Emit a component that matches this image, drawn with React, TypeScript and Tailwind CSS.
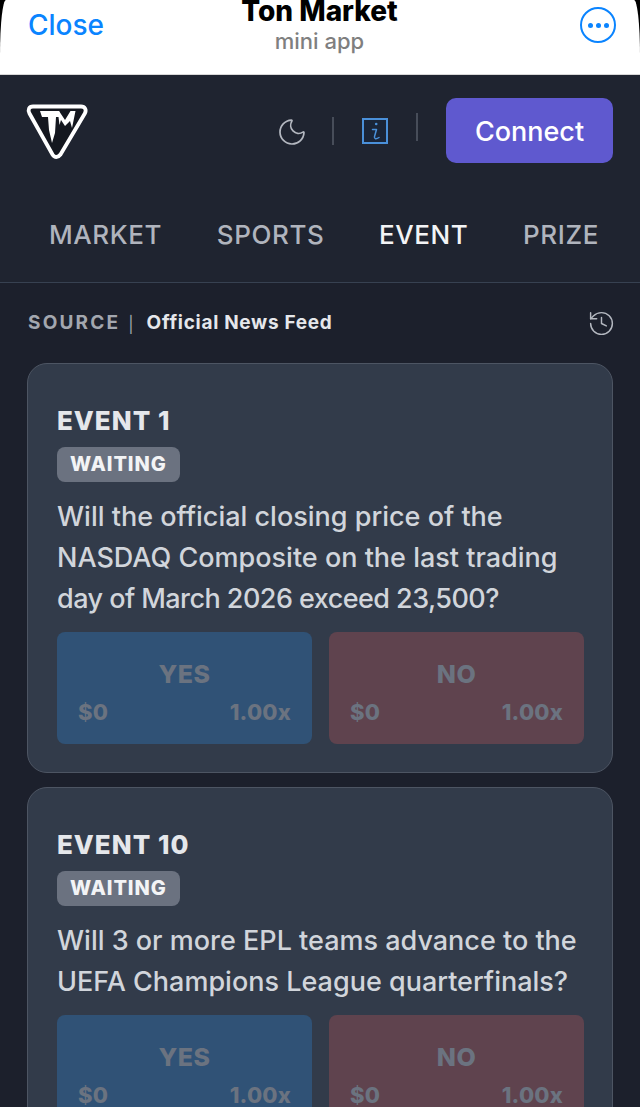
import { type ReactNode } from "react";
import { History, Moon } from "lucide-react";

type EventCardProps = {
  title: string;
  question: ReactNode;
};

const Logo = () => (
  <svg width="68" height="62" viewBox="0 0 68 62" fill="none" className="mt-[2px] ml-[-3px]">
    <path
      d="M9 6.500 H57 C61 6.500 62.800 10 60.800 13.500 L36.500 54.500 C34 57.800 30.500 57.800 28.500 54.500 L5.500 13.500 C3.500 10 5 6.500 9 6.500 Z"
      stroke="white"
      strokeWidth="3.800"
      strokeLinejoin="round"
      fill="#14171f"
    />
    <path d="M16 11 H35 L37 17 H32 L31 33 L28 43 L25 30 L24 17 H18 Z" fill="white" />
    <path d="M35 11 L41 20 L46.500 11 H51.500 L48 28 L46 21 L41 26 L37 20 L35.500 25 L34.500 17 Z" fill="white" />
  </svg>
);

const InfoIcon = () => (
  <svg width="26" height="26" viewBox="0 0 26 26" fill="none" className="mt-[1px] ml-[28px]">
    <rect x="1" y="1" width="24" height="24" fill="#1a2538" stroke="#4a90d9" strokeWidth="2" />
    <circle cx="14.200" cy="6" r="1.300" fill="#4a90d9" />
    <path
      d="M10.500 11.500 H14.500 L12.500 18.500 C12 21 14 21.500 17 19.500"
      stroke="#4a90d9"
      strokeWidth="1.500"
      strokeLinecap="round"
      strokeLinejoin="round"
    />
  </svg>
);

const BetButton = ({ label, bg }: { label: string; bg: string }) => (
  <div className={`h-[112px] flex-1 rounded-lg px-[21px] pt-[26px] font-extrabold text-[#6b7380] ${bg}`}>
    <p className="text-center text-[25px] leading-[32px] tracking-[0.5px]">{label}</p>
    <div className="mt-[9px] flex justify-between text-[22px] leading-[26px] tracking-[0.2px]">
      <span>$0</span>
      <span>1.00x</span>
    </div>
  </div>
);

const EventCard = ({ title, question }: EventCardProps) => (
  <div className="rounded-[20px] border border-[#4d5563] bg-[#323b4a] pt-[40px] pr-[28px] pb-[28px] pl-[29px]">
    <h3 className="text-[26px] leading-[34px] font-extrabold tracking-[1px] text-[#e5e7eb]">{title}</h3>
    <span className="mt-[9px] inline-block rounded-lg bg-[#6b7280] px-[13px] text-[20px] leading-[35px] font-extrabold tracking-[0.9px] text-[#f3f4f6]">
      WAITING
    </span>
    <p className="mt-[14px] text-[27px] leading-[41px] font-medium text-[#d1d5db]">{question}</p>
    <div className="mt-[13px] flex gap-[17px]">
      <BetButton label="YES" bg="bg-[#305276]" />
      <BetButton label="NO" bg="bg-[#5f434e]" />
    </div>
  </div>
);

export default function App() {
  return (
    <div className="h-[1107px] w-[640px] overflow-hidden bg-[#1f2430] font-['Inter',sans-serif]">
      {/* telegram mini app bar */}
      <div className="bg-black">
        <div className="grid h-[75px] grid-cols-[1fr_auto_1fr] items-start rounded-tl-[6px_55px] rounded-tr-[6px_55px] border-b border-[#d8d8d8] bg-white pr-[24px] pl-[28px]">
          <span className="mt-[7px] text-[28px] leading-[36px] font-medium text-[#0a84ff]">Close</span>
          <div className="pr-[5px] text-center">
            <p className="mt-[-7px] text-[28px] leading-[36px] font-extrabold text-black">Ton Market</p>
            <p className="mt-[-3px] text-[22px] leading-[30px] font-medium text-[#7f7f7f]">mini app</p>
          </div>
          <div className="mt-[7px] flex h-[36px] w-[36px] items-center justify-center gap-[3px] justify-self-end rounded-full border-[2.500px] border-[#0a84ff]">
            <i className="h-[5px] w-[5px] rounded-full bg-[#0a84ff]" />
            <i className="h-[5px] w-[5px] rounded-full bg-[#0a84ff]" />
            <i className="h-[5px] w-[5px] rounded-full bg-[#0a84ff]" />
          </div>
        </div>
      </div>

      <div className="flex h-[111px] items-start justify-between px-[27px] pt-[23px]">
        <Logo />
        <div className="flex items-center">
          <Moon size={32} strokeWidth={1.300} className="mt-[2px] text-[#b4b8c0]" />
          <div className="ml-[24px] h-[28px] w-[2px] bg-[#474d59]" />
          <InfoIcon />
          <div className="mt-[-7px] ml-[28px] h-[28px] w-[2px] bg-[#474d59]" />
          <button className="ml-[28px] h-[65px] w-[167px] rounded-[10px] bg-[#5f59cf] pt-[3px] text-[27px] font-medium text-white">
            Connect
          </button>
        </div>
      </div>

      <nav className="flex h-[97px] justify-between border-b border-[#374151] pt-[29px] pr-[41px] pl-[49px] text-[26px] leading-[40px] font-medium tracking-[0.6px]">
        <span className="text-[#b0b4bd]">MARKET</span>
        <span className="text-[#b0b4bd]">SPORTS</span>
        <span className="text-[#f3f4f6]">EVENT</span>
        <span className="text-[#b0b4bd]">PRIZE</span>
      </nav>

      <div className="bg-[#1c202c] px-[27px]">
        <div className="flex h-[80px] items-center justify-between pt-[1px]">
          <div className="flex items-center pl-[1px] text-[19px] font-bold">
            <span className="tracking-[2.200px] text-[#a3a7af]">SOURCE</span>
            <span className="mr-[13px] ml-[8px] text-[16px] font-normal text-[#a3a7af]">|</span>
            <span className="tracking-[0.700px] text-[#e5e7eb]">Official News Feed</span>
          </div>
          <History size={29} strokeWidth={1.200} className="mr-[-3px] text-[#b4b8c0]" />
        </div>
        <div className="flex flex-col gap-[14px]">
          <EventCard
            title="EVENT 1"
            question={
              <>
                Will the official closing price of the NASDAQ Composite on the last trading
                <span className="block tracking-[-0.55px]">day of March 2026 exceed 23,500?</span>
              </>
            }
          />
          <EventCard
            title="EVENT 10"
            question="Will 3 or more EPL teams advance to the UEFA Champions League quarterfinals?"
          />
        </div>
      </div>
    </div>
  );
}
